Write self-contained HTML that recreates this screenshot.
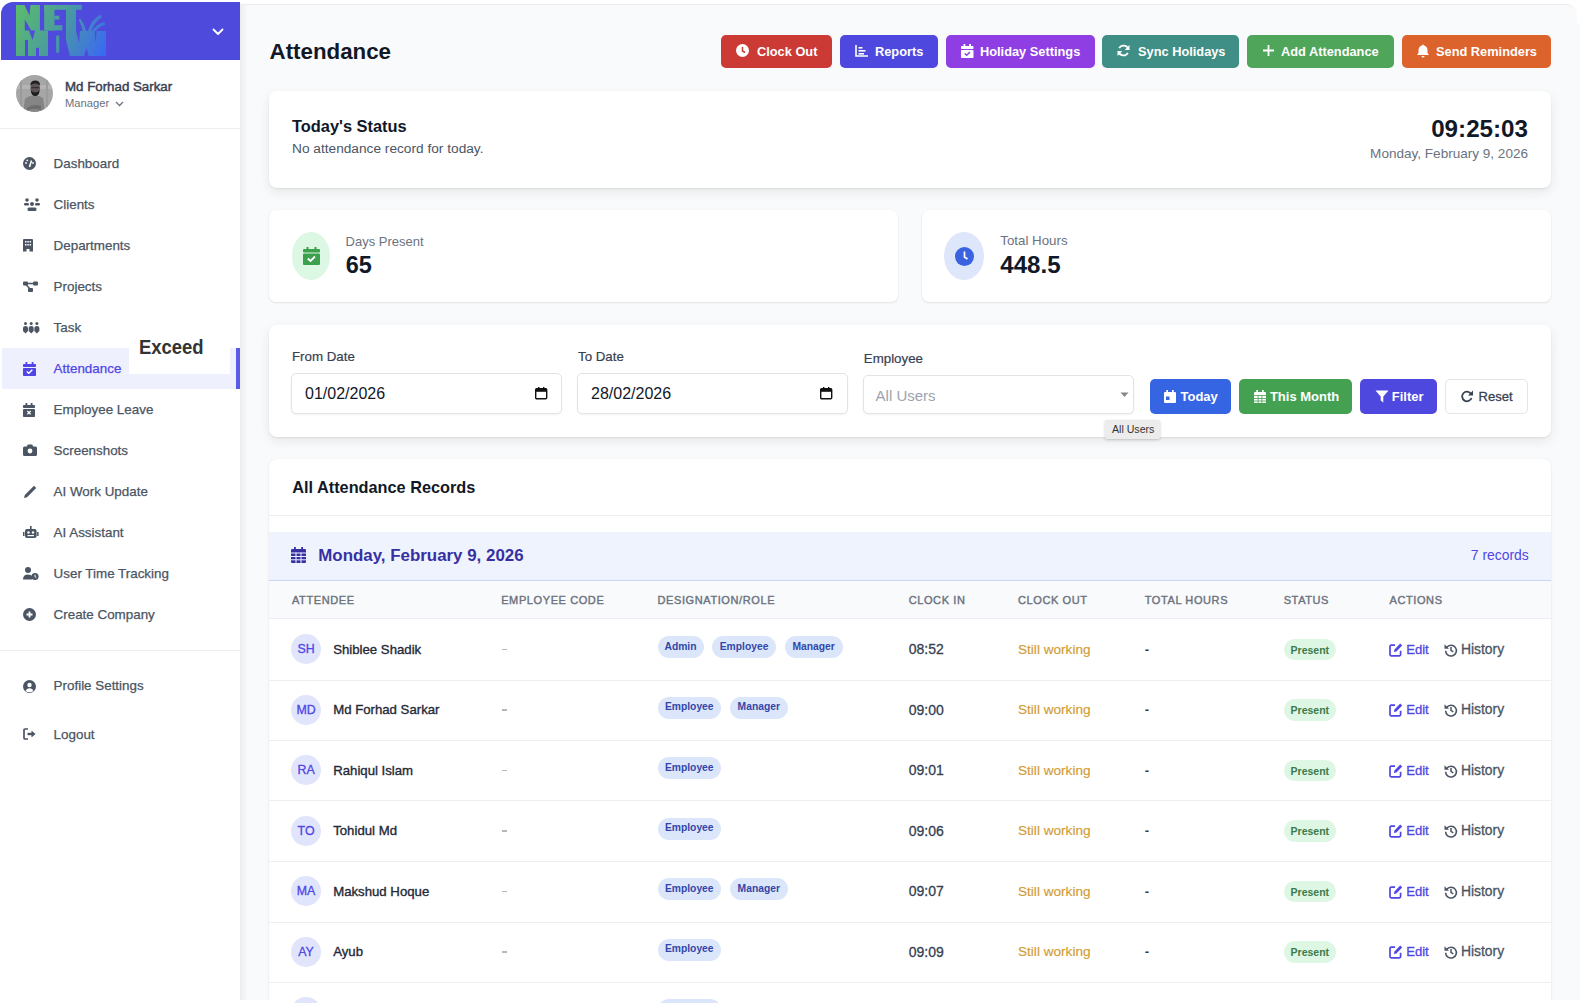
<!DOCTYPE html><html><head><meta charset="utf-8"><style>
html,body{margin:0;padding:0;width:1580px;height:1003px;overflow:hidden;background:#fff;font-family:"Liberation Sans",sans-serif}
.t{position:absolute;white-space:nowrap;line-height:normal}
.r{position:absolute}
svg.r{overflow:visible}
</style></head><body>
<div class="r" style="left:240px;top:3.5px;width:1336px;height:996.5px;background:#f9fafb;border-top-right-radius:10px;border-top:1.5px solid #ededf0;box-sizing:border-box;box-shadow:0 1px 3px rgba(0,0,0,0.05)"></div>
<div class="r" style="left:1560px;top:24px;width:20px;height:976px;background:#f9fafb"></div>
<div class="r" style="left:240px;top:5px;width:8px;height:995px;background:linear-gradient(90deg,#ededf0,#f9fafb)"></div>
<div class="r" style="left:0px;top:0px;width:240px;height:1003px;background:#fff"></div>
<div class="r" style="left:1px;top:2px;width:239px;height:58px;background:#4e4bdc;border-top-left-radius:12px"></div>
<svg class="r" style="left:16px;top:5px;" width="91" height="51" viewBox="0 0 91 51"><defs><linearGradient id="lg" gradientUnits="userSpaceOnUse" x1="0" y1="0" x2="91" y2="45">
<stop offset="0" stop-color="#5cbd6a"/><stop offset="0.45" stop-color="#4b9e9a"/><stop offset="1" stop-color="#3a68f4"/></linearGradient></defs>
<g fill="url(#lg)">
<rect x="0" y="0" width="23.9" height="51"/>
<rect x="28.2" y="0" width="10.3" height="25.4"/>
<rect x="28.2" y="0" width="37.8" height="4.8"/>
<rect x="38.5" y="10.7" width="4.8" height="3.9"/>
<rect x="32" y="20.2" width="14.3" height="5.2"/>
<rect x="50" y="0" width="10" height="51"/>
<rect x="23" y="25.4" width="9" height="25.6"/>
<rect x="40.1" y="30.2" width="3.2" height="17.7" rx="1.5"/>
<rect x="60" y="26" width="30" height="25"/>
<polygon points="60,51 68,51 62,35 60,35"/>
<path d="M64.3,13.5 Q68.5,19 70.6,27 L67,27 Q65.5,20 62.8,15Z"/>
<path d="M85,9.5 Q75,14 71.5,27 L75.2,27 Q78,17 85.8,12.2Z"/>
<path d="M88.5,17 Q80,18.5 76,26.5 L79.5,26.5 Q82.5,21.5 89,20Z"/>
</g>
<g fill="#4e4bdc">
<polygon points="8.5,0 14.4,0 13.5,10.5"/>
<polygon points="8.8,14.6 8.8,25.4 15.2,25.4"/>
<polygon points="9,35 12,35 12,51 9,51"/>
<polygon points="12.9,25.4 19.2,25.4 16.5,35"/>
<polygon points="20,42.8 23,42.8 23,51 20,51"/>
<polygon points="50,35 50,51 54,51"/>
<polygon points="60,26 64,26 63,38"/>
<polygon points="68,51 72.7,51 70.4,43"/>
<polygon points="78.6,26 80.6,26 79.6,38"/>
</g></svg>
<svg class="r" style="left:212px;top:27.5px;" width="12" height="8" viewBox="0 0 12 8"><path d="M1.5,1.5 L6,6 L10.5,1.5" stroke="#fff" stroke-width="1.8" fill="none" stroke-linecap="round" stroke-linejoin="round"/></svg>
<svg class="r" style="left:16px;top:75px;" width="37" height="37" viewBox="0 0 37 37"><defs><clipPath id="av"><circle cx="18.5" cy="18.5" r="18.5"/></clipPath></defs><g clip-path="url(#av)"><rect width="37" height="37" fill="#a6a6a6"/><rect x="0" y="10" width="37" height="4" fill="#b4b4b4"/><rect x="4" y="0" width="2" height="37" fill="#9a9a9a"/><rect x="30" y="0" width="2" height="37" fill="#9c9c9c"/><path d="M7,37 L9,24 Q12,20.5 18,20.5 Q24,20.5 27,23 L29,37 Z" fill="#858585"/><path d="M11,33 Q17,28 25,31 L25,35 Q17,32 11,36Z" fill="#6e6e6e"/><ellipse cx="19.2" cy="13.5" rx="4.8" ry="7" fill="#5e5555"/><path d="M14.2,10.5 Q14.5,5.5 19.2,5.5 Q24,5.5 24.2,10.5 Q22,8.5 19.2,8.5 Q16.4,8.5 14.2,10.5Z" fill="#222"/><path d="M14.8,15.5 Q15.5,21 19.2,21 Q23,21 23.6,15.5 Q21.5,17.5 19.2,17.5 Q17,17.5 14.8,15.5Z" fill="#1e1e1e"/><rect x="15.5" y="12" width="7.5" height="1.2" fill="#333"/></g></svg>
<div class="t" style="left:65.00px;top:78.96px;font-size:13.3px;font-weight:400;color:#374151;-webkit-text-stroke:0.45px #374151;">Md Forhad Sarkar</div>
<div class="t" style="left:65.00px;top:97.46px;font-size:11.2px;font-weight:400;color:#6b7280;">Manager</div>
<svg class="r" style="left:115px;top:101px;" width="9" height="6" viewBox="0 0 9 6"><path d="M1,1 L4.5,4.5 L8,1" stroke="#6b7280" stroke-width="1.3" fill="none"/></svg>
<div class="r" style="left:0px;top:128px;width:240px;height:1px;background:#eceef1"></div>
<div class="r" style="left:2px;top:348px;width:234px;height:41px;background:#eef0fd"></div>
<div class="r" style="left:236px;top:348px;width:4px;height:41px;background:#5b5be8"></div>
<div class="t" style="left:53.60px;top:156.07px;font-size:13.4px;font-weight:400;color:#4b5563;-webkit-text-stroke:0.25px #4b5563;">Dashboard</div>
<svg class="r" style="left:23px;top:157px;" width="14" height="14" viewBox="0 0 14 14"><circle cx="6.5" cy="6.5" r="6.5" fill="#4b5563"/><path d="M6.5,10 L8.5,3.5" stroke="#fff" stroke-width="1.6"/><circle cx="3" cy="6" r="0.9" fill="#fff"/><circle cx="4.3" cy="3.3" r="0.9" fill="#fff"/><circle cx="10" cy="6" r="0.9" fill="#fff"/></svg>
<div class="t" style="left:53.60px;top:197.07px;font-size:13.4px;font-weight:400;color:#4b5563;-webkit-text-stroke:0.25px #4b5563;">Clients</div>
<svg class="r" style="left:24px;top:198px;" width="17" height="14" viewBox="0 0 17 14"><circle cx="3" cy="2" r="1.8" fill="#4b5563"/><circle cx="13" cy="2" r="1.8" fill="#4b5563"/><circle cx="8" cy="6" r="2" fill="#4b5563"/><rect x="0" y="5" width="5" height="2.5" rx="1.2" fill="#4b5563"/><rect x="11" y="5" width="5" height="2.5" rx="1.2" fill="#4b5563"/><rect x="3.5" y="9.5" width="9" height="3.5" rx="1.5" fill="#4b5563"/></svg>
<div class="t" style="left:53.60px;top:238.07px;font-size:13.4px;font-weight:400;color:#4b5563;-webkit-text-stroke:0.25px #4b5563;">Departments</div>
<svg class="r" style="left:23px;top:239px;" width="11" height="13" viewBox="0 0 11 13"><path d="M0,1 Q0,0 1,0 L9,0 Q10,0 10,1 L10,12.5 L6.5,12.5 L6.5,10 L3.5,10 L3.5,12.5 L0,12.5 Z" fill="#4b5563"/><g fill="#fff"><rect x="2" y="2" width="1.5" height="1.5"/><rect x="4.3" y="2" width="1.5" height="1.5"/><rect x="6.6" y="2" width="1.5" height="1.5"/><rect x="2" y="5" width="1.5" height="1.5"/><rect x="4.3" y="5" width="1.5" height="1.5"/><rect x="6.6" y="5" width="1.5" height="1.5"/></g></svg>
<div class="t" style="left:53.60px;top:279.07px;font-size:13.4px;font-weight:400;color:#4b5563;-webkit-text-stroke:0.25px #4b5563;">Projects</div>
<svg class="r" style="left:23px;top:281px;" width="16" height="12" viewBox="0 0 16 12"><rect x="0" y="0.5" width="5" height="4" rx="1" fill="#4b5563"/><rect x="10" y="0.5" width="5" height="4" rx="1" fill="#4b5563"/><rect x="5" y="7" width="5" height="4" rx="1" fill="#4b5563"/><path d="M4,2.5 L11,2.5 M3,3.5 L7,8" stroke="#4b5563" stroke-width="1.4"/></svg>
<div class="t" style="left:53.60px;top:320.07px;font-size:13.4px;font-weight:400;color:#4b5563;-webkit-text-stroke:0.25px #4b5563;">Task</div>
<svg class="r" style="left:23px;top:322px;" width="17" height="12" viewBox="0 0 17 12"><g fill="#4b5563"><circle cx="2.5" cy="1.6" r="1.5"/><circle cx="8.2" cy="1.6" r="1.5"/><circle cx="13.9" cy="1.6" r="1.5"/><path d="M0,6 Q0,4 2.5,4 Q5,4 5,6 L5,9 L2.5,11.5 L0,9Z"/><path d="M5.7,6 Q5.7,4 8.2,4 Q10.7,4 10.7,6 L10.7,9 L8.2,11.5 L5.7,9Z"/><path d="M11.4,6 Q11.4,4 13.9,4 Q16.4,4 16.4,6 L16.4,9 L13.9,11.5 L11.4,9Z"/></g></svg>
<div class="t" style="left:53.60px;top:361.07px;font-size:13.4px;font-weight:400;color:#4f46e5;-webkit-text-stroke:0.25px #4f46e5;">Attendance</div>
<svg class="r" style="left:23px;top:362px;" width="14" height="15" viewBox="0 0 14 15"><g fill="#4f46e5"><rect x="2.5" y="0" width="1.8" height="3"/><rect x="8.7" y="0" width="1.8" height="3"/><rect x="0" y="2" width="13" height="3" rx="0.8"/><rect x="0" y="6" width="13" height="8" rx="0.8"/></g><path d="M3.8,9.5 L5.8,11.3 L9.3,7.8" stroke="#fff" stroke-width="1.5" fill="none"/></svg>
<div class="t" style="left:53.60px;top:402.07px;font-size:13.4px;font-weight:400;color:#4b5563;-webkit-text-stroke:0.25px #4b5563;">Employee Leave</div>
<svg class="r" style="left:23px;top:403px;" width="17" height="15" viewBox="0 0 17 15"><g fill="#4b5563"><rect x="2.5" y="0" width="1.8" height="3"/><rect x="7.7" y="0" width="1.8" height="3"/><rect x="0" y="2" width="12" height="3" rx="0.8"/><rect x="0" y="6" width="12" height="8" rx="0.8"/></g><path d="M4.3,8 L7.7,11.4 M7.7,8 L4.3,11.4" stroke="#fff" stroke-width="1.3"/></svg>
<div class="t" style="left:53.60px;top:443.07px;font-size:13.4px;font-weight:400;color:#4b5563;-webkit-text-stroke:0.25px #4b5563;">Screenshots</div>
<svg class="r" style="left:23px;top:444px;" width="17" height="15" viewBox="0 0 17 15"><path d="M0,4 Q0,2.5 1.5,2.5 L3.8,2.5 L4.8,0.5 L9.2,0.5 L10.2,2.5 L12.5,2.5 Q14,2.5 14,4 L14,10.5 Q14,12 12.5,12 L1.5,12 Q0,12 0,10.5Z" fill="#4b5563"/><circle cx="7" cy="7" r="2.4" fill="#fff"/></svg>
<div class="t" style="left:53.60px;top:484.07px;font-size:13.4px;font-weight:400;color:#4b5563;-webkit-text-stroke:0.25px #4b5563;">AI Work Update</div>
<svg class="r" style="left:23px;top:485px;" width="17" height="15" viewBox="0 0 17 15"><path d="M11,0.8 L13.2,3 L4,12.2 L1,13 L1.8,10Z" fill="#4b5563"/></svg>
<div class="t" style="left:53.60px;top:525.07px;font-size:13.4px;font-weight:400;color:#4b5563;-webkit-text-stroke:0.25px #4b5563;">AI Assistant</div>
<svg class="r" style="left:23px;top:526px;" width="17" height="15" viewBox="0 0 17 15"><g fill="#4b5563"><rect x="7" y="0" width="1.6" height="3"/><rect x="2" y="3" width="11.6" height="9" rx="2"/><rect x="0" y="6" width="1.5" height="4"/><rect x="14.1" y="6" width="1.5" height="4"/></g><circle cx="5.5" cy="6.5" r="1.2" fill="#fff"/><circle cx="10" cy="6.5" r="1.2" fill="#fff"/><rect x="4.5" y="9" width="6.5" height="1.2" fill="#fff"/></svg>
<div class="t" style="left:53.60px;top:566.07px;font-size:13.4px;font-weight:400;color:#4b5563;-webkit-text-stroke:0.25px #4b5563;">User Time Tracking</div>
<svg class="r" style="left:23px;top:567px;" width="17" height="15" viewBox="0 0 17 15"><g fill="#4b5563"><circle cx="5" cy="3" r="3"/><path d="M0,12.5 Q0,7.5 5,7.5 Q8,7.5 9,9 L9,12.5Z"/><circle cx="12" cy="9.5" r="3.6"/></g><path d="M12,7.8 L12,9.7 L13.3,10.5" stroke="#fff" stroke-width="1" fill="none"/></svg>
<div class="t" style="left:53.60px;top:607.07px;font-size:13.4px;font-weight:400;color:#4b5563;-webkit-text-stroke:0.25px #4b5563;">Create Company</div>
<svg class="r" style="left:23px;top:608px;" width="17" height="15" viewBox="0 0 17 15"><circle cx="6.5" cy="6.5" r="6.5" fill="#4b5563"/><path d="M6.5,3.5 L6.5,9.5 M3.5,6.5 L9.5,6.5" stroke="#fff" stroke-width="1.8"/></svg>
<div class="r" style="left:0px;top:650px;width:240px;height:1px;background:#eceef1"></div>
<div class="t" style="left:53.60px;top:678.37px;font-size:13.4px;font-weight:400;color:#4b5563;-webkit-text-stroke:0.25px #4b5563;">Profile Settings</div>
<svg class="r" style="left:23px;top:680px;" width="14" height="14" viewBox="0 0 14 14"><circle cx="6.5" cy="6.5" r="6.5" fill="#4b5563"/><circle cx="6.5" cy="5" r="2.2" fill="#fff"/><path d="M2.7,11 Q3.5,8.3 6.5,8.3 Q9.5,8.3 10.3,11 Q8.8,12.2 6.5,12.2 Q4.2,12.2 2.7,11Z" fill="#fff"/></svg>
<div class="t" style="left:53.60px;top:727.37px;font-size:13.4px;font-weight:400;color:#4b5563;-webkit-text-stroke:0.25px #4b5563;">Logout</div>
<svg class="r" style="left:23px;top:728px;" width="14" height="14" viewBox="0 0 14 14"><path d="M5,1 L2,1 Q1,1 1,2 L1,10 Q1,11 2,11 L5,11" stroke="#4b5563" stroke-width="1.7" fill="none"/><path d="M4.5,6 L9,6" stroke="#4b5563" stroke-width="2.4"/><path d="M8.5,2.5 L12.5,6 L8.5,9.5Z" fill="#4b5563"/></svg>
<div class="r" style="left:129px;top:330px;width:101px;height:44px;background:#fff"></div>
<div class="t" style="left:139.00px;top:336.34px;font-size:20.4px;font-weight:700;color:#333333;transform:scaleX(0.905);transform-origin:0 0">Exceed</div>
<div class="t" style="left:269.60px;top:39.22px;font-size:22.3px;font-weight:700;color:#111827;">Attendance</div>
<div class="r" style="left:721px;top:34.5px;width:111px;height:33px;background:#cb3a34;border-radius:5px"></div>
<div class="t" style="left:757.00px;top:44.12px;font-size:12.8px;font-weight:700;color:#ffffff;">Clock Out</div>
<svg class="r" style="left:736px;top:44px;" width="14" height="14" viewBox="0 0 14 14"><circle cx="6.5" cy="6.5" r="6.5" fill="#fff"/><path d="M6.5,3 L6.5,7 L9,8.5" stroke="#cb3a34" stroke-width="1.5" fill="none"/></svg>
<div class="r" style="left:840px;top:34.5px;width:98px;height:33px;background:#4e48df;border-radius:5px"></div>
<div class="t" style="left:875.00px;top:44.12px;font-size:12.8px;font-weight:700;color:#ffffff;">Reports</div>
<svg class="r" style="left:855px;top:44px;" width="14" height="14" viewBox="0 0 14 14"><path d="M1,1 L1,12 L13,12" stroke="#fff" stroke-width="1.6" fill="none"/><rect x="3.5" y="3" width="4" height="1.6" fill="#fff"/><rect x="3.5" y="6" width="7" height="1.6" fill="#fff"/><rect x="3.5" y="9" width="5.5" height="1.6" fill="#fff"/></svg>
<div class="r" style="left:946px;top:34.5px;width:149px;height:33px;background:#8f3ee3;border-radius:5px"></div>
<div class="t" style="left:980.00px;top:44.12px;font-size:12.8px;font-weight:700;color:#ffffff;">Holiday Settings</div>
<svg class="r" style="left:961px;top:44px;" width="14" height="14" viewBox="0 0 14 14"><g fill="#fff"><rect x="2.5" y="0" width="1.8" height="3"/><rect x="8.2" y="0" width="1.8" height="3"/><rect x="0" y="2" width="12.5" height="3" rx="0.8"/><rect x="0" y="6" width="12.5" height="8" rx="0.8"/></g><path d="M3.7,9.5 L5.7,11.3 L9,8" stroke="#8f3ee3" stroke-width="1.5" fill="none"/></svg>
<div class="r" style="left:1102px;top:34.5px;width:137px;height:33px;background:#3f8f86;border-radius:5px"></div>
<div class="t" style="left:1138.00px;top:44.12px;font-size:12.8px;font-weight:700;color:#ffffff;">Sync Holidays</div>
<svg class="r" style="left:1117px;top:44px;" width="14" height="14" viewBox="0 0 14 14"><path d="M11.5,5.5 A5,5 0 0 0 2.2,4.2 M1.5,7.5 A5,5 0 0 0 10.8,8.8" stroke="#fff" stroke-width="1.8" fill="none"/><path d="M12.5,1 L12.5,6 L7.8,6Z M0.5,12 L0.5,7 L5.2,7Z" fill="#fff"/></svg>
<div class="r" style="left:1247px;top:34.5px;width:147px;height:33px;background:#4fa55a;border-radius:5px"></div>
<div class="t" style="left:1281.00px;top:44.12px;font-size:12.8px;font-weight:700;color:#ffffff;">Add Attendance</div>
<svg class="r" style="left:1262px;top:44px;" width="14" height="14" viewBox="0 0 14 14"><path d="M6.5,1 L6.5,12 M1,6.5 L12,6.5" stroke="#fff" stroke-width="1.8"/></svg>
<div class="r" style="left:1402px;top:34.5px;width:149px;height:33px;background:#dd632c;border-radius:5px"></div>
<div class="t" style="left:1436.00px;top:44.12px;font-size:12.8px;font-weight:700;color:#ffffff;">Send Reminders</div>
<svg class="r" style="left:1417px;top:44px;" width="14" height="14" viewBox="0 0 14 14"><path d="M6,0.5 Q6.8,0.5 6.8,1.5 Q10.5,2.3 10.5,6.5 L10.5,9 L12,11 L0,11 L1.5,9 L1.5,6.5 Q1.5,2.3 5.2,1.5 Q5.2,0.5 6,0.5Z" fill="#fff"/><path d="M4.5,12 L7.5,12 Q7.5,13.5 6,13.5 Q4.5,13.5 4.5,12Z" fill="#fff"/></svg>
<div class="r" style="left:269px;top:91px;width:1282px;height:96.5px;background:#fff;border-radius:8px;box-shadow:0 1px 2px rgba(0,0,0,0.07),0 4px 12px rgba(0,0,0,0.08)"></div>
<div class="t" style="left:292.00px;top:116.96px;font-size:16.4px;font-weight:700;color:#111827;">Today's Status</div>
<div class="t" style="left:292.00px;top:140.80px;font-size:13.7px;font-weight:400;color:#4b5563;">No attendance record for today.</div>
<div class="t" style="right:52.00px;top:115.30px;font-size:24.2px;font-weight:700;color:#111827;">09:25:03</div>
<div class="t" style="right:52.00px;top:145.84px;font-size:13.55px;font-weight:400;color:#6b7280;">Monday, February 9, 2026</div>
<div class="r" style="left:269px;top:210px;width:629px;height:92px;background:#fff;border-radius:7px;box-shadow:0 1px 2px rgba(0,0,0,0.09),0 0 2px rgba(0,0,0,0.04)"></div>
<div class="r" style="left:922px;top:210px;width:629px;height:92px;background:#fff;border-radius:7px;box-shadow:0 1px 2px rgba(0,0,0,0.09),0 0 2px rgba(0,0,0,0.04)"></div>
<div class="r" style="left:291.5px;top:232px;width:38.5px;height:48px;border-radius:50%;background:#dcf7e3"></div>
<div class="r" style="left:944px;top:232px;width:40px;height:48px;border-radius:50%;background:#dde6fb"></div>
<svg class="r" style="left:303px;top:247px;" width="17" height="18" viewBox="0 0 17 18"><g fill="#3ca04c"><rect x="3.5" y="0" width="2" height="3"/><rect x="11.5" y="0" width="2" height="3"/><rect x="0" y="2" width="17" height="3.5" rx="1"/><rect x="0" y="6.5" width="17" height="11.5" rx="1"/></g><path d="M4.8,11.5 L7.5,14 L12,9.5" stroke="#fff" stroke-width="1.8" fill="none"/></svg>
<svg class="r" style="left:954.5px;top:246.5px;" width="19" height="19" viewBox="0 0 19 19"><circle cx="9.5" cy="9.5" r="9.5" fill="#3b63e0"/><path d="M9.5,4.5 L9.5,10 L12.5,12" stroke="#fff" stroke-width="1.7" fill="none"/></svg>
<div class="t" style="left:345.60px;top:233.63px;font-size:13px;font-weight:400;color:#6b7280;">Days Present</div>
<div class="t" style="left:345.80px;top:251.93px;font-size:23.5px;font-weight:700;color:#111827;">65</div>
<div class="t" style="left:1000.30px;top:233.36px;font-size:13.3px;font-weight:400;color:#6b7280;">Total Hours</div>
<div class="t" style="left:1000.30px;top:251.39px;font-size:24.1px;font-weight:700;color:#111827;">448.5</div>
<div class="r" style="left:269px;top:325px;width:1282px;height:112px;background:#fff;border-radius:8px;box-shadow:0 1px 2px rgba(0,0,0,0.07),0 4px 12px rgba(0,0,0,0.08)"></div>
<div class="t" style="left:292.00px;top:349.46px;font-size:13.3px;font-weight:400;color:#374151;-webkit-text-stroke:0.2px #374151;">From Date</div>
<div class="t" style="left:578.00px;top:349.46px;font-size:13.3px;font-weight:400;color:#374151;-webkit-text-stroke:0.2px #374151;">To Date</div>
<div class="t" style="left:863.80px;top:350.96px;font-size:13.3px;font-weight:400;color:#374151;-webkit-text-stroke:0.2px #374151;">Employee</div>
<div class="r" style="left:291px;top:373px;width:271px;height:41px;background:#fff;border:1px solid #e1e3e6;border-radius:5px;box-sizing:border-box;box-shadow:0 1px 2px rgba(0,0,0,0.05)"></div>
<div class="r" style="left:577px;top:373px;width:271px;height:41px;background:#fff;border:1px solid #e1e3e6;border-radius:5px;box-sizing:border-box;box-shadow:0 1px 2px rgba(0,0,0,0.05)"></div>
<div class="t" style="left:305.00px;top:384.92px;font-size:16px;font-weight:400;color:#111827;">01/02/2026</div>
<div class="t" style="left:591.00px;top:384.92px;font-size:16px;font-weight:400;color:#111827;">28/02/2026</div>
<svg class="r" style="left:535px;top:387px;" width="13" height="13" viewBox="0 0 13 13"><g fill="#111"><rect x="0.7" y="1.8" width="11" height="10" rx="1" fill="none" stroke="#111" stroke-width="1.4"/><rect x="0.7" y="1.8" width="11" height="3" /><rect x="3" y="0" width="1.4" height="3"/><rect x="8" y="0" width="1.4" height="3"/></g></svg>
<svg class="r" style="left:820px;top:387px;" width="13" height="13" viewBox="0 0 13 13"><g fill="#111"><rect x="0.7" y="1.8" width="11" height="10" rx="1" fill="none" stroke="#111" stroke-width="1.4"/><rect x="0.7" y="1.8" width="11" height="3" /><rect x="3" y="0" width="1.4" height="3"/><rect x="8" y="0" width="1.4" height="3"/></g></svg>
<div class="r" style="left:863px;top:375px;width:271px;height:39px;background:#fff;border:1px solid #e1e3e6;border-radius:5px;box-sizing:border-box;box-shadow:0 1px 2px rgba(0,0,0,0.05)"></div>
<div class="t" style="left:875.60px;top:386.93px;font-size:15px;font-weight:400;color:#9ca3af;">All Users</div>
<svg class="r" style="left:1120px;top:392px;" width="9" height="6" viewBox="0 0 9 6"><path d="M0.5,0.5 L8.5,0.5 L4.5,5Z" fill="#888"/></svg>
<div class="r" style="left:1149.5px;top:379px;width:81.5px;height:35px;background:#3665e3;border-radius:5px"></div>
<div class="r" style="left:1239px;top:379px;width:113px;height:35px;background:#45a152;border-radius:5px"></div>
<div class="r" style="left:1360px;top:379px;width:77px;height:35px;background:#4e48df;border-radius:5px"></div>
<div class="r" style="left:1445px;top:379px;width:83px;height:35px;background:#fff;border:1px solid #e3e5e8;border-radius:5px;box-sizing:border-box"></div>
<div class="t" style="left:1180.50px;top:389.44px;font-size:13px;font-weight:700;color:#fff;">Today</div>
<div class="t" style="left:1269.90px;top:389.44px;font-size:13px;font-weight:700;color:#fff;">This Month</div>
<div class="t" style="left:1391.80px;top:389.44px;font-size:13px;font-weight:700;color:#fff;">Filter</div>
<div class="t" style="left:1478.60px;top:389.44px;font-size:13px;font-weight:400;color:#374151;-webkit-text-stroke:0.3px #374151;">Reset</div>
<svg class="r" style="left:1164px;top:389.5px;" width="12" height="13" viewBox="0 0 12 13"><g fill="#fff"><rect x="2.3" y="0" width="1.7" height="3"/><rect x="8" y="0" width="1.7" height="3"/><rect x="0" y="2" width="12" height="11" rx="1"/></g><rect x="2" y="6.5" width="3.5" height="3.5" fill="#3665e3"/></svg>
<svg class="r" style="left:1253.5px;top:389.5px;" width="12" height="13" viewBox="0 0 12 13"><g fill="#fff"><rect x="2.3" y="0" width="1.7" height="3"/><rect x="8" y="0" width="1.7" height="3"/><rect x="0" y="2" width="12" height="11" rx="1"/></g><g fill="#45a152"><rect x="0" y="5" width="12" height="0.8"/><rect x="0" y="8" width="12" height="0.8"/><rect x="0" y="10.6" width="12" height="0.8"/><rect x="3.7" y="5" width="0.8" height="8"/><rect x="7.5" y="5" width="0.8" height="8"/></g></svg>
<svg class="r" style="left:1374.5px;top:390px;" width="14" height="13" viewBox="0 0 14 13"><path d="M0.5,0.5 L13.5,0.5 L8.3,6.5 L8.3,12.5 L5.7,10.5 L5.7,6.5Z" fill="#fff"/></svg>
<svg class="r" style="left:1461px;top:389.5px;" width="13" height="13" viewBox="0 0 13 13"><path d="M10.5,8 A4.8,4.8 0 1 1 9.8,3.6" stroke="#374151" stroke-width="1.8" fill="none"/><path d="M12,0.5 L12,5.5 L7,5.5Z" fill="#374151"/></svg>
<div class="r" style="left:1105px;top:420px;width:55px;height:18.5px;background:#ececed;border-radius:2px;box-shadow:0 1px 3px rgba(0,0,0,0.2)"></div>
<div class="t" style="left:1112.00px;top:423.21px;font-size:10.6px;font-weight:400;color:#333;">All Users</div>
<div class="r" style="left:269px;top:459px;width:1282px;height:600px;background:#fff;border-radius:8px 8px 0 0;box-shadow:0 1px 3px rgba(0,0,0,0.08),0 0 2px rgba(0,0,0,0.04)"></div>
<div class="t" style="left:292.30px;top:478.25px;font-size:16.3px;font-weight:700;color:#111827;">All Attendance Records</div>
<div class="r" style="left:269px;top:515px;width:1282px;height:1px;background:#eceef1"></div>
<div class="r" style="left:269px;top:531.5px;width:1282px;height:49.5px;background:#eff3fe;border-bottom:1.5px solid #cdd3f5;box-sizing:border-box"></div>
<svg class="r" style="left:291px;top:547px;" width="15" height="16" viewBox="0 0 15 16"><g fill="#3730a3"><rect x="3" y="0" width="1.8" height="3"/><rect x="10.2" y="0" width="1.8" height="3"/><rect x="0" y="2" width="15" height="14" rx="1.2"/></g><g fill="#eef1fd"><rect x="0" y="5.5" width="15" height="1"/><rect x="0" y="9" width="15" height="1"/><rect x="0" y="12.3" width="15" height="1"/><rect x="4.5" y="5.5" width="1" height="10.5"/><rect x="9.5" y="5.5" width="1" height="10.5"/></g></svg>
<div class="t" style="left:318.30px;top:545.91px;font-size:16.9px;font-weight:700;color:#3730a3;">Monday, February 9, 2026</div>
<div class="t" style="right:51.30px;top:546.92px;font-size:13.9px;font-weight:400;color:#4f46e5;">7 records</div>
<div class="r" style="left:269px;top:581px;width:1282px;height:38px;background:#f9fafb;border-bottom:1px solid #eceef1;box-sizing:border-box"></div>
<div class="t" style="left:292.00px;top:594.25px;font-size:11px;font-weight:400;color:#6b7280;-webkit-text-stroke:0.4px #6b7280;letter-spacing:0.6px">ATTENDEE</div>
<div class="t" style="left:501.20px;top:594.25px;font-size:11px;font-weight:400;color:#6b7280;-webkit-text-stroke:0.4px #6b7280;letter-spacing:0.6px">EMPLOYEE CODE</div>
<div class="t" style="left:657.50px;top:594.25px;font-size:11px;font-weight:400;color:#6b7280;-webkit-text-stroke:0.4px #6b7280;letter-spacing:0.6px">DESIGNATION/ROLE</div>
<div class="t" style="left:908.70px;top:594.25px;font-size:11px;font-weight:400;color:#6b7280;-webkit-text-stroke:0.4px #6b7280;letter-spacing:0.6px">CLOCK IN</div>
<div class="t" style="left:1018.00px;top:594.25px;font-size:11px;font-weight:400;color:#6b7280;-webkit-text-stroke:0.4px #6b7280;letter-spacing:0.6px">CLOCK OUT</div>
<div class="t" style="left:1144.70px;top:594.25px;font-size:11px;font-weight:400;color:#6b7280;-webkit-text-stroke:0.4px #6b7280;letter-spacing:0.6px">TOTAL HOURS</div>
<div class="t" style="left:1283.70px;top:594.25px;font-size:11px;font-weight:400;color:#6b7280;-webkit-text-stroke:0.4px #6b7280;letter-spacing:0.6px">STATUS</div>
<div class="t" style="left:1389.50px;top:594.25px;font-size:11px;font-weight:400;color:#6b7280;-webkit-text-stroke:0.4px #6b7280;letter-spacing:0.6px">ACTIONS</div>
<div class="r" style="left:291.3px;top:634.25px;width:29.5px;height:30px;border-radius:50%;background:#e1e5fc"></div>
<div class="t" style="left:291.3px;width:29.5px;text-align:center;top:642.33px;font-size:12.4px;color:#4f46e5;-webkit-text-stroke:0.3px #4f46e5">SH</div>
<div class="t" style="left:333.20px;top:641.60px;font-size:13.2px;font-weight:400;color:#1f2937;-webkit-text-stroke:0.35px #1f2937;">Shiblee Shadik</div>
<div class="r" style="left:501.5px;top:648.95px;width:5px;height:1.4px;background:#b4b8be"></div>
<div class="r" style="left:657.5px;top:636.45px;width:46px;height:21.7px;border-radius:11px;background:#dce6fb"></div>
<div class="t" style="left:657.5px;width:46px;text-align:center;top:640.83px;font-size:10.3px;font-weight:700;color:#3346a8">Admin</div>
<div class="r" style="left:712.3px;top:636.45px;width:63.5px;height:21.7px;border-radius:11px;background:#dce6fb"></div>
<div class="t" style="left:712.3px;width:63.5px;text-align:center;top:640.83px;font-size:10.3px;font-weight:700;color:#3346a8">Employee</div>
<div class="r" style="left:784.6px;top:636.45px;width:58px;height:21.7px;border-radius:11px;background:#dce6fb"></div>
<div class="t" style="left:784.6px;width:58px;text-align:center;top:640.83px;font-size:10.3px;font-weight:700;color:#3346a8">Manager</div>
<div class="t" style="left:908.70px;top:641.38px;font-size:14px;font-weight:400;color:#374151;-webkit-text-stroke:0.3px #374151;">08:52</div>
<div class="t" style="left:1018.00px;top:641.74px;font-size:13.6px;font-weight:400;color:#d29b35;-webkit-text-stroke:0.15px #d29b35;">Still working</div>
<div class="t" style="left:1144.70px;top:641.78px;font-size:13px;font-weight:700;color:#374151;">-</div>
<div class="r" style="left:1283.7px;top:638.65px;width:52.3px;height:21.5px;border-radius:11px;background:#ddf7e4"></div>
<div class="t" style="left:1283.7px;width:52.3px;text-align:center;top:643.85px;font-size:10.5px;font-weight:700;color:#3b7a4a">Present</div>
<svg class="r" style="left:1388.5px;top:643px;" width="14" height="14" viewBox="0 0 14 14"><path d="M6,2.2 L2.2,2.2 Q1,2.2 1,3.4 L1,11.6 Q1,12.8 2.2,12.8 L10.4,12.8 Q11.6,12.8 11.6,11.6 L11.6,7.8" stroke="#4f46e5" stroke-width="1.7" fill="none"/><path d="M11.2,0.6 L13.2,2.6 L7.4,8.4 L4.9,9 L5.5,6.5Z" fill="#4f46e5"/></svg>
<div class="t" style="left:1406.20px;top:641.69px;font-size:13.1px;font-weight:400;color:#4f46e5;-webkit-text-stroke:0.3px #4f46e5;">Edit</div>
<svg class="r" style="left:1443.5px;top:643px;" width="14" height="14" viewBox="0 0 14 14"><path d="M2.6,4.5 A5.4,5.4 0 1 1 1.6,7.8" stroke="#4b5563" stroke-width="1.6" fill="none"/><path d="M0.5,1.2 L0.5,5.8 L5,5.8Z" fill="#4b5563"/><path d="M7,4 L7,7.4 L9.3,8.8" stroke="#4b5563" stroke-width="1.5" fill="none"/></svg>
<div class="t" style="left:1460.90px;top:640.97px;font-size:13.9px;font-weight:400;color:#4b5563;-webkit-text-stroke:0.3px #4b5563;">History</div>
<div class="r" style="left:269px;top:680px;width:1282px;height:1px;background:#eceef1"></div>
<div class="r" style="left:291.3px;top:694.75px;width:29.5px;height:30px;border-radius:50%;background:#e1e5fc"></div>
<div class="t" style="left:291.3px;width:29.5px;text-align:center;top:702.83px;font-size:12.4px;color:#4f46e5;-webkit-text-stroke:0.3px #4f46e5">MD</div>
<div class="t" style="left:333.20px;top:702.10px;font-size:13.2px;font-weight:400;color:#1f2937;-webkit-text-stroke:0.35px #1f2937;">Md Forhad Sarkar</div>
<div class="r" style="left:501.5px;top:709.45px;width:5px;height:1.4px;background:#b4b8be"></div>
<div class="r" style="left:657.5px;top:696.95px;width:63.5px;height:21.7px;border-radius:11px;background:#dce6fb"></div>
<div class="t" style="left:657.5px;width:63.5px;text-align:center;top:701.33px;font-size:10.3px;font-weight:700;color:#3346a8">Employee</div>
<div class="r" style="left:729.8px;top:696.95px;width:58px;height:21.7px;border-radius:11px;background:#dce6fb"></div>
<div class="t" style="left:729.8px;width:58px;text-align:center;top:701.33px;font-size:10.3px;font-weight:700;color:#3346a8">Manager</div>
<div class="t" style="left:908.70px;top:701.88px;font-size:14px;font-weight:400;color:#374151;-webkit-text-stroke:0.3px #374151;">09:00</div>
<div class="t" style="left:1018.00px;top:702.24px;font-size:13.6px;font-weight:400;color:#d29b35;-webkit-text-stroke:0.15px #d29b35;">Still working</div>
<div class="t" style="left:1144.70px;top:702.28px;font-size:13px;font-weight:700;color:#374151;">-</div>
<div class="r" style="left:1283.7px;top:699.15px;width:52.3px;height:21.5px;border-radius:11px;background:#ddf7e4"></div>
<div class="t" style="left:1283.7px;width:52.3px;text-align:center;top:704.35px;font-size:10.5px;font-weight:700;color:#3b7a4a">Present</div>
<svg class="r" style="left:1388.5px;top:703px;" width="14" height="14" viewBox="0 0 14 14"><path d="M6,2.2 L2.2,2.2 Q1,2.2 1,3.4 L1,11.6 Q1,12.8 2.2,12.8 L10.4,12.8 Q11.6,12.8 11.6,11.6 L11.6,7.8" stroke="#4f46e5" stroke-width="1.7" fill="none"/><path d="M11.2,0.6 L13.2,2.6 L7.4,8.4 L4.9,9 L5.5,6.5Z" fill="#4f46e5"/></svg>
<div class="t" style="left:1406.20px;top:702.19px;font-size:13.1px;font-weight:400;color:#4f46e5;-webkit-text-stroke:0.3px #4f46e5;">Edit</div>
<svg class="r" style="left:1443.5px;top:703px;" width="14" height="14" viewBox="0 0 14 14"><path d="M2.6,4.5 A5.4,5.4 0 1 1 1.6,7.8" stroke="#4b5563" stroke-width="1.6" fill="none"/><path d="M0.5,1.2 L0.5,5.8 L5,5.8Z" fill="#4b5563"/><path d="M7,4 L7,7.4 L9.3,8.8" stroke="#4b5563" stroke-width="1.5" fill="none"/></svg>
<div class="t" style="left:1460.90px;top:701.47px;font-size:13.9px;font-weight:400;color:#4b5563;-webkit-text-stroke:0.3px #4b5563;">History</div>
<div class="r" style="left:269px;top:740px;width:1282px;height:1px;background:#eceef1"></div>
<div class="r" style="left:291.3px;top:755.25px;width:29.5px;height:30px;border-radius:50%;background:#e1e5fc"></div>
<div class="t" style="left:291.3px;width:29.5px;text-align:center;top:763.33px;font-size:12.4px;color:#4f46e5;-webkit-text-stroke:0.3px #4f46e5">RA</div>
<div class="t" style="left:333.20px;top:762.60px;font-size:13.2px;font-weight:400;color:#1f2937;-webkit-text-stroke:0.35px #1f2937;">Rahiqul Islam</div>
<div class="r" style="left:501.5px;top:769.95px;width:5px;height:1.4px;background:#b4b8be"></div>
<div class="r" style="left:657.5px;top:757.45px;width:63.5px;height:21.7px;border-radius:11px;background:#dce6fb"></div>
<div class="t" style="left:657.5px;width:63.5px;text-align:center;top:761.83px;font-size:10.3px;font-weight:700;color:#3346a8">Employee</div>
<div class="t" style="left:908.70px;top:762.38px;font-size:14px;font-weight:400;color:#374151;-webkit-text-stroke:0.3px #374151;">09:01</div>
<div class="t" style="left:1018.00px;top:762.74px;font-size:13.6px;font-weight:400;color:#d29b35;-webkit-text-stroke:0.15px #d29b35;">Still working</div>
<div class="t" style="left:1144.70px;top:762.78px;font-size:13px;font-weight:700;color:#374151;">-</div>
<div class="r" style="left:1283.7px;top:759.65px;width:52.3px;height:21.5px;border-radius:11px;background:#ddf7e4"></div>
<div class="t" style="left:1283.7px;width:52.3px;text-align:center;top:764.85px;font-size:10.5px;font-weight:700;color:#3b7a4a">Present</div>
<svg class="r" style="left:1388.5px;top:764px;" width="14" height="14" viewBox="0 0 14 14"><path d="M6,2.2 L2.2,2.2 Q1,2.2 1,3.4 L1,11.6 Q1,12.8 2.2,12.8 L10.4,12.8 Q11.6,12.8 11.6,11.6 L11.6,7.8" stroke="#4f46e5" stroke-width="1.7" fill="none"/><path d="M11.2,0.6 L13.2,2.6 L7.4,8.4 L4.9,9 L5.5,6.5Z" fill="#4f46e5"/></svg>
<div class="t" style="left:1406.20px;top:762.69px;font-size:13.1px;font-weight:400;color:#4f46e5;-webkit-text-stroke:0.3px #4f46e5;">Edit</div>
<svg class="r" style="left:1443.5px;top:764px;" width="14" height="14" viewBox="0 0 14 14"><path d="M2.6,4.5 A5.4,5.4 0 1 1 1.6,7.8" stroke="#4b5563" stroke-width="1.6" fill="none"/><path d="M0.5,1.2 L0.5,5.8 L5,5.8Z" fill="#4b5563"/><path d="M7,4 L7,7.4 L9.3,8.8" stroke="#4b5563" stroke-width="1.5" fill="none"/></svg>
<div class="t" style="left:1460.90px;top:761.97px;font-size:13.9px;font-weight:400;color:#4b5563;-webkit-text-stroke:0.3px #4b5563;">History</div>
<div class="r" style="left:269px;top:800px;width:1282px;height:1px;background:#eceef1"></div>
<div class="r" style="left:291.3px;top:815.75px;width:29.5px;height:30px;border-radius:50%;background:#e1e5fc"></div>
<div class="t" style="left:291.3px;width:29.5px;text-align:center;top:823.83px;font-size:12.4px;color:#4f46e5;-webkit-text-stroke:0.3px #4f46e5">TO</div>
<div class="t" style="left:333.20px;top:823.10px;font-size:13.2px;font-weight:400;color:#1f2937;-webkit-text-stroke:0.35px #1f2937;">Tohidul Md</div>
<div class="r" style="left:501.5px;top:830.45px;width:5px;height:1.4px;background:#b4b8be"></div>
<div class="r" style="left:657.5px;top:817.95px;width:63.5px;height:21.7px;border-radius:11px;background:#dce6fb"></div>
<div class="t" style="left:657.5px;width:63.5px;text-align:center;top:822.33px;font-size:10.3px;font-weight:700;color:#3346a8">Employee</div>
<div class="t" style="left:908.70px;top:822.88px;font-size:14px;font-weight:400;color:#374151;-webkit-text-stroke:0.3px #374151;">09:06</div>
<div class="t" style="left:1018.00px;top:823.24px;font-size:13.6px;font-weight:400;color:#d29b35;-webkit-text-stroke:0.15px #d29b35;">Still working</div>
<div class="t" style="left:1144.70px;top:823.28px;font-size:13px;font-weight:700;color:#374151;">-</div>
<div class="r" style="left:1283.7px;top:820.15px;width:52.3px;height:21.5px;border-radius:11px;background:#ddf7e4"></div>
<div class="t" style="left:1283.7px;width:52.3px;text-align:center;top:825.35px;font-size:10.5px;font-weight:700;color:#3b7a4a">Present</div>
<svg class="r" style="left:1388.5px;top:824px;" width="14" height="14" viewBox="0 0 14 14"><path d="M6,2.2 L2.2,2.2 Q1,2.2 1,3.4 L1,11.6 Q1,12.8 2.2,12.8 L10.4,12.8 Q11.6,12.8 11.6,11.6 L11.6,7.8" stroke="#4f46e5" stroke-width="1.7" fill="none"/><path d="M11.2,0.6 L13.2,2.6 L7.4,8.4 L4.9,9 L5.5,6.5Z" fill="#4f46e5"/></svg>
<div class="t" style="left:1406.20px;top:823.19px;font-size:13.1px;font-weight:400;color:#4f46e5;-webkit-text-stroke:0.3px #4f46e5;">Edit</div>
<svg class="r" style="left:1443.5px;top:824px;" width="14" height="14" viewBox="0 0 14 14"><path d="M2.6,4.5 A5.4,5.4 0 1 1 1.6,7.8" stroke="#4b5563" stroke-width="1.6" fill="none"/><path d="M0.5,1.2 L0.5,5.8 L5,5.8Z" fill="#4b5563"/><path d="M7,4 L7,7.4 L9.3,8.8" stroke="#4b5563" stroke-width="1.5" fill="none"/></svg>
<div class="t" style="left:1460.90px;top:822.47px;font-size:13.9px;font-weight:400;color:#4b5563;-webkit-text-stroke:0.3px #4b5563;">History</div>
<div class="r" style="left:269px;top:861px;width:1282px;height:1px;background:#eceef1"></div>
<div class="r" style="left:291.3px;top:876.25px;width:29.5px;height:30px;border-radius:50%;background:#e1e5fc"></div>
<div class="t" style="left:291.3px;width:29.5px;text-align:center;top:884.33px;font-size:12.4px;color:#4f46e5;-webkit-text-stroke:0.3px #4f46e5">MA</div>
<div class="t" style="left:333.20px;top:883.60px;font-size:13.2px;font-weight:400;color:#1f2937;-webkit-text-stroke:0.35px #1f2937;">Makshud Hoque</div>
<div class="r" style="left:501.5px;top:890.95px;width:5px;height:1.4px;background:#b4b8be"></div>
<div class="r" style="left:657.5px;top:878.45px;width:63.5px;height:21.7px;border-radius:11px;background:#dce6fb"></div>
<div class="t" style="left:657.5px;width:63.5px;text-align:center;top:882.83px;font-size:10.3px;font-weight:700;color:#3346a8">Employee</div>
<div class="r" style="left:729.8px;top:878.45px;width:58px;height:21.7px;border-radius:11px;background:#dce6fb"></div>
<div class="t" style="left:729.8px;width:58px;text-align:center;top:882.83px;font-size:10.3px;font-weight:700;color:#3346a8">Manager</div>
<div class="t" style="left:908.70px;top:883.38px;font-size:14px;font-weight:400;color:#374151;-webkit-text-stroke:0.3px #374151;">09:07</div>
<div class="t" style="left:1018.00px;top:883.74px;font-size:13.6px;font-weight:400;color:#d29b35;-webkit-text-stroke:0.15px #d29b35;">Still working</div>
<div class="t" style="left:1144.70px;top:883.78px;font-size:13px;font-weight:700;color:#374151;">-</div>
<div class="r" style="left:1283.7px;top:880.65px;width:52.3px;height:21.5px;border-radius:11px;background:#ddf7e4"></div>
<div class="t" style="left:1283.7px;width:52.3px;text-align:center;top:885.85px;font-size:10.5px;font-weight:700;color:#3b7a4a">Present</div>
<svg class="r" style="left:1388.5px;top:885px;" width="14" height="14" viewBox="0 0 14 14"><path d="M6,2.2 L2.2,2.2 Q1,2.2 1,3.4 L1,11.6 Q1,12.8 2.2,12.8 L10.4,12.8 Q11.6,12.8 11.6,11.6 L11.6,7.8" stroke="#4f46e5" stroke-width="1.7" fill="none"/><path d="M11.2,0.6 L13.2,2.6 L7.4,8.4 L4.9,9 L5.5,6.5Z" fill="#4f46e5"/></svg>
<div class="t" style="left:1406.20px;top:883.69px;font-size:13.1px;font-weight:400;color:#4f46e5;-webkit-text-stroke:0.3px #4f46e5;">Edit</div>
<svg class="r" style="left:1443.5px;top:885px;" width="14" height="14" viewBox="0 0 14 14"><path d="M2.6,4.5 A5.4,5.4 0 1 1 1.6,7.8" stroke="#4b5563" stroke-width="1.6" fill="none"/><path d="M0.5,1.2 L0.5,5.8 L5,5.8Z" fill="#4b5563"/><path d="M7,4 L7,7.4 L9.3,8.8" stroke="#4b5563" stroke-width="1.5" fill="none"/></svg>
<div class="t" style="left:1460.90px;top:882.97px;font-size:13.9px;font-weight:400;color:#4b5563;-webkit-text-stroke:0.3px #4b5563;">History</div>
<div class="r" style="left:269px;top:922px;width:1282px;height:1px;background:#eceef1"></div>
<div class="r" style="left:291.3px;top:936.75px;width:29.5px;height:30px;border-radius:50%;background:#e1e5fc"></div>
<div class="t" style="left:291.3px;width:29.5px;text-align:center;top:944.83px;font-size:12.4px;color:#4f46e5;-webkit-text-stroke:0.3px #4f46e5">AY</div>
<div class="t" style="left:333.20px;top:944.10px;font-size:13.2px;font-weight:400;color:#1f2937;-webkit-text-stroke:0.35px #1f2937;">Ayub</div>
<div class="r" style="left:501.5px;top:951.45px;width:5px;height:1.4px;background:#b4b8be"></div>
<div class="r" style="left:657.5px;top:938.95px;width:63.5px;height:21.7px;border-radius:11px;background:#dce6fb"></div>
<div class="t" style="left:657.5px;width:63.5px;text-align:center;top:943.33px;font-size:10.3px;font-weight:700;color:#3346a8">Employee</div>
<div class="t" style="left:908.70px;top:943.88px;font-size:14px;font-weight:400;color:#374151;-webkit-text-stroke:0.3px #374151;">09:09</div>
<div class="t" style="left:1018.00px;top:944.24px;font-size:13.6px;font-weight:400;color:#d29b35;-webkit-text-stroke:0.15px #d29b35;">Still working</div>
<div class="t" style="left:1144.70px;top:944.28px;font-size:13px;font-weight:700;color:#374151;">-</div>
<div class="r" style="left:1283.7px;top:941.15px;width:52.3px;height:21.5px;border-radius:11px;background:#ddf7e4"></div>
<div class="t" style="left:1283.7px;width:52.3px;text-align:center;top:946.35px;font-size:10.5px;font-weight:700;color:#3b7a4a">Present</div>
<svg class="r" style="left:1388.5px;top:945px;" width="14" height="14" viewBox="0 0 14 14"><path d="M6,2.2 L2.2,2.2 Q1,2.2 1,3.4 L1,11.6 Q1,12.8 2.2,12.8 L10.4,12.8 Q11.6,12.8 11.6,11.6 L11.6,7.8" stroke="#4f46e5" stroke-width="1.7" fill="none"/><path d="M11.2,0.6 L13.2,2.6 L7.4,8.4 L4.9,9 L5.5,6.5Z" fill="#4f46e5"/></svg>
<div class="t" style="left:1406.20px;top:944.19px;font-size:13.1px;font-weight:400;color:#4f46e5;-webkit-text-stroke:0.3px #4f46e5;">Edit</div>
<svg class="r" style="left:1443.5px;top:945px;" width="14" height="14" viewBox="0 0 14 14"><path d="M2.6,4.5 A5.4,5.4 0 1 1 1.6,7.8" stroke="#4b5563" stroke-width="1.6" fill="none"/><path d="M0.5,1.2 L0.5,5.8 L5,5.8Z" fill="#4b5563"/><path d="M7,4 L7,7.4 L9.3,8.8" stroke="#4b5563" stroke-width="1.5" fill="none"/></svg>
<div class="t" style="left:1460.90px;top:943.47px;font-size:13.9px;font-weight:400;color:#4b5563;-webkit-text-stroke:0.3px #4b5563;">History</div>
<div class="r" style="left:269px;top:982px;width:1282px;height:1px;background:#eceef1"></div>
<div class="r" style="left:291.3px;top:997.25px;width:29.5px;height:30px;border-radius:50%;background:#e1e5fc"></div>
<div class="r" style="left:657.5px;top:999.45px;width:63.5px;height:21.7px;border-radius:11px;background:#dce6fb"></div>
<div class="t" style="left:657.5px;width:63.5px;text-align:center;top:1003.83px;font-size:10.3px;font-weight:700;color:#3346a8">Employee</div>
<div class="r" style="left:240px;top:1000px;width:29px;height:3px;background:#fff"></div><div class="r" style="left:1551px;top:1000px;width:29px;height:3px;background:#fff"></div>
</body></html>
